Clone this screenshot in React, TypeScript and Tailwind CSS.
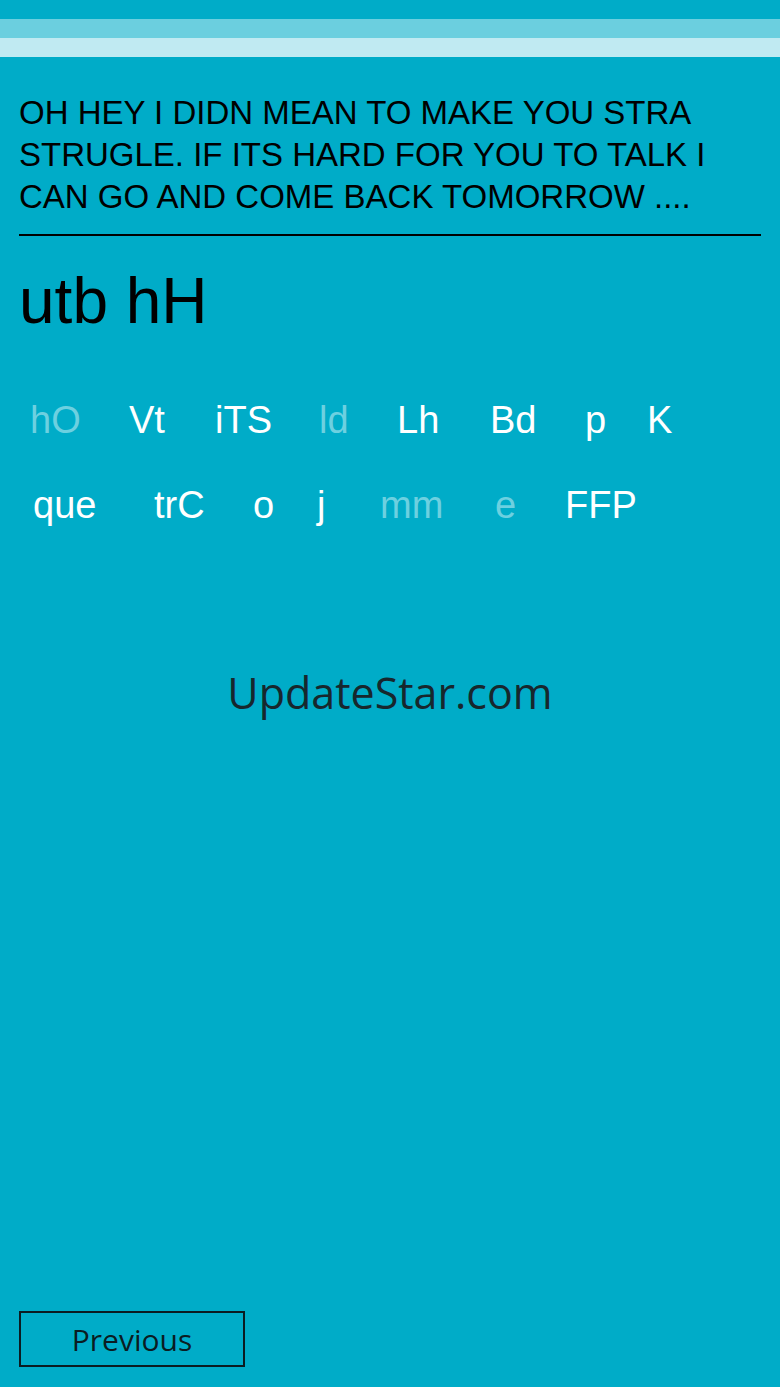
import React from 'react'

// [word, faded, slot width]
const rows: { pad: string; words: [string, boolean, string][] }[] = [
  {
    pad: 'pl-[11px]',
    words: [
      ['hO', true, 'w-[99px]'],
      ['Vt', false, 'w-[86px]'],
      ['iTS', false, 'w-[104px]'],
      ['ld', true, 'w-[78px]'],
      ['Lh', false, 'w-[93px]'],
      ['Bd', false, 'w-[95px]'],
      ['p', false, 'w-[62px]'],
      ['K', false, 'w-auto'],
    ],
  },
  {
    pad: 'pl-[14px]',
    words: [
      ['que', false, 'w-[121px]'],
      ['trC', false, 'w-[99px]'],
      ['o', false, 'w-[64px]'],
      ['j', false, 'w-[63px]'],
      ['mm', true, 'w-[115px]'],
      ['e', true, 'w-[70px]'],
      ['FFP', false, 'w-auto'],
    ],
  },
]

export default function App() {
  return (
    <div className="min-h-screen bg-[#00acc8] flex flex-col font-['Liberation_Sans',Arial,sans-serif]">
      <div className="h-[19px]" />
      <div className="h-[19px] bg-[#6bcfdf]" />
      <div className="h-[19px] bg-[#c0eaf2]" />

      <div className="px-[19px] pt-[35px]">
        <p className="text-[33px] leading-[42px] text-black">
          OH HEY I DIDN MEAN TO MAKE YOU STRA STRUGLE. IF ITS HARD FOR YOU TO TALK I CAN GO AND COME BACK TOMORROW ....
        </p>
        <div className="mt-[16px] h-[2px] bg-black" />

        <div className="mt-[33px] text-[64px] leading-[64px] text-black">utb hH</div>

        <div className="mt-[45px] flex flex-col">
          {rows.map((row, i) => (
            <div key={i} className={`flex h-[85px] items-center text-[38px] leading-[85px] ${row.pad}`}>
              {row.words.map(([w, faded, width]) => (
                <span key={w} className={`shrink-0 ${width} ${faded ? 'text-[#6dd0e0]' : 'text-white'}`}>
                  {w}
                </span>
              ))}
            </div>
          ))}
        </div>

        <div className="mt-[117px] text-center text-[43px] leading-[56px] text-[#17272d] font-['Open_Sans',sans-serif]">
          UpdateStar.com
        </div>
      </div>

      <div className="mt-auto px-[19px] pb-[20px]">
        <button className="w-[226px] h-[56px] border-2 border-[#0b1c22] text-[30px] text-[#0b1c22] font-['Open_Sans',sans-serif] bg-transparent">
          Previous
        </button>
      </div>
    </div>
  )
}
